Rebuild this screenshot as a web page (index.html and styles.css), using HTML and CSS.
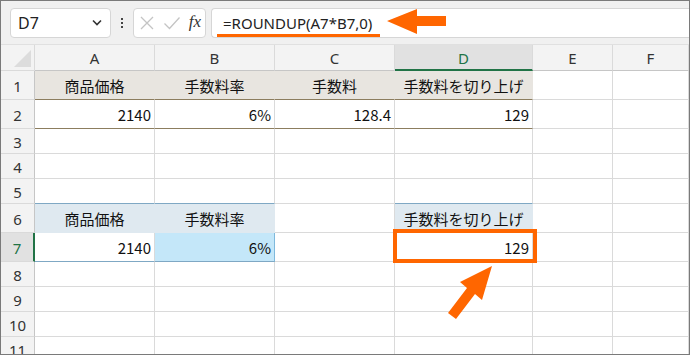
FILE: index.html
```html
<!doctype html>
<html>
	<head>
		<title>ROUNDUP</title>
		<link rel="stylesheet" href="styles.css">
	</head>
	<body>
		<div class="window">
			<div class="formulaBar">
				<div class="nameBox">
					<span>D7</span>
					<svg class="chevron" width="10" height="7" viewBox="0 0 10 7"><path d="M1 1.5 L5 5.5 L9 1.5" fill="none" stroke="#333" stroke-width="1.6"/></svg>
				</div>
				<div class="dots"><i></i><i></i><i></i></div>
				<div class="iconBox">
					<svg width="16" height="16" viewBox="0 0 16 16"><path d="M2 2 L14 14 M14 2 L2 14" stroke="#c4c4c4" stroke-width="1.3"/></svg>
					<svg width="18" height="16" viewBox="0 0 18 16"><path d="M1.5 8.5 L6.5 13.5 L16.5 2.5" fill="none" stroke="#c4c4c4" stroke-width="1.3"/></svg>
					<span class="fx">fx</span>
				</div>
				<div class="formula"><span class="mark">=ROUNDUP(A7*B7,0)</span></div>
			</div>

			<div class="sheet">
				<div class="corner"><i></i></div>
				<div class="ch">A</div>
				<div class="ch">B</div>
				<div class="ch">C</div>
				<div class="ch active">D</div>
				<div class="ch">E</div>
				<div class="ch">F</div>

				<div class="rh">1</div>
				<div class="c head">商品価格</div>
				<div class="c head">手数料率</div>
				<div class="c head">手数料</div>
				<div class="c head">手数料を切り上げ</div>
				<div class="c"></div>
				<div class="c"></div>

				<div class="rh">2</div>
				<div class="c num line">2140</div>
				<div class="c num line">6%</div>
				<div class="c num line">128.4</div>
				<div class="c num line">129</div>
				<div class="c"></div>
				<div class="c"></div>

				<div class="rh">3</div><div class="c"></div><div class="c"></div><div class="c"></div><div class="c"></div><div class="c"></div><div class="c"></div>
				<div class="rh">4</div><div class="c"></div><div class="c"></div><div class="c"></div><div class="c"></div><div class="c"></div><div class="c"></div>
				<div class="rh">5</div><div class="c"></div><div class="c"></div><div class="c"></div><div class="c"></div><div class="c"></div><div class="c"></div>

				<div class="rh">6</div>
				<div class="c blueHead">商品価格</div>
				<div class="c blueHead">手数料率</div>
				<div class="c"></div>
				<div class="c blueHead">手数料を切り上げ</div>
				<div class="c"></div>
				<div class="c"></div>

				<div class="rh active">7</div>
				<div class="c num blueLine">2140</div>
				<div class="c num blueLine picked">6%</div>
				<div class="c"></div>
				<div class="c num">129</div>
				<div class="c"></div>
				<div class="c"></div>

				<div class="rh">8</div><div class="c"></div><div class="c"></div><div class="c"></div><div class="c"></div><div class="c"></div><div class="c"></div>
				<div class="rh">9</div><div class="c"></div><div class="c"></div><div class="c"></div><div class="c"></div><div class="c"></div><div class="c"></div>
				<div class="rh">10</div><div class="c"></div><div class="c"></div><div class="c"></div><div class="c"></div><div class="c"></div><div class="c"></div>
				<div class="rh">11</div><div class="c"></div><div class="c"></div><div class="c"></div><div class="c"></div><div class="c"></div><div class="c"></div>
			</div>

			<svg class="marks" width="690" height="355" viewBox="0 0 690 355">
				<polygon points="387,21 417,9 417,16 446,16 446,26 417,26 417,34" fill="#ff6600"/>
				<rect x="395" y="231" width="140" height="30" fill="none" stroke="#ff6600" stroke-width="4"/>
				<polygon points="492,266 482,300 475,294 456,319 448,313 467,288 460,282" fill="#ff6600"/>
			</svg>
		</div>
	</body>
</html>
```

FILE: styles.css
```css
html, body {
	margin: 0;
	padding: 0;
	background: #fff;
}

.window {
	position: relative;
	width: 688px;
	height: 353px;
	border: 1px solid #7a7a7a;
	overflow: hidden;
	font-family: "Noto Sans CJK JP", sans-serif;
	color: #111;
}

.formulaBar {
	display: flex;
	align-items: center;
	height: 44px;
	padding: 0 0 0 9px;
	box-sizing: border-box;
	background: #f0f0f0;
	border-bottom: 1px solid #e0e0e0;
}

.nameBox,
.iconBox,
.formula {
	height: 30px;
	box-sizing: border-box;
	background: #fff;
	border: 1px solid #d6d6d6;
	border-radius: 4px;
	display: flex;
	align-items: center;
}

.nameBox {
	width: 101px;
	padding: 0 8px 0 7px;
	justify-content: space-between;
	font-family: "Noto Sans", sans-serif;
	font-size: 16px;
	color: #222;
}

.dots {
	width: 22px;
	display: flex;
	flex-direction: column;
	align-items: center;
	gap: 2px;
}

.dots i {
	width: 2px;
	height: 2px;
	background: #444;
}

.iconBox {
	width: 73px;
	padding: 0 4px 0 5px;
	justify-content: space-between;
}

.fx {
	font-family: "Liberation Serif", serif;
	font-style: italic;
	font-size: 17px;
	color: #333;
	padding-bottom: 2px;
}

.formula {
	flex: 1;
	margin-left: 5px;
	border-right: 0;
	border-radius: 4px 0 0 4px;
	padding-left: 5px;
	font-family: "Noto Sans", sans-serif;
	font-size: 15px;
	color: #222;
}

.mark {
	padding: 0 8px 0 6px;
	line-height: 22px;
	border-bottom: 3px solid #ff6600;
	margin-top: 4px;
}

.sheet {
	display: grid;
	grid-template-columns: 34px 120px 120px 120px 138px 80px 1fr;
	grid-template-rows: 26px 29px 29px 25px 25px 25px 29px 29px 25px 25px 25px 25px;
	background: #fff;
}

.sheet > div {
	box-sizing: border-box;
	border-right: 1px solid #dadada;
	border-bottom: 1px solid #dadada;
	display: flex;
	align-items: center;
	font-size: 15px;
	padding-top: 1px;
}

.corner {
	background: #f3f3f3;
	position: relative;
}

.corner i {
	position: absolute;
	right: 3px;
	bottom: 3px;
	width: 0;
	height: 0;
	border-left: 17px solid transparent;
	border-bottom: 17px solid #dcdcdc;
}

.sheet .ch {
	background: #f3f3f3;
	justify-content: center;
	font-family: "Noto Sans", sans-serif;
	color: #333;
	border-bottom-color: #c6c6c6;
}

.sheet .ch.active {
	background: #e1e1e1;
	color: #217346;
	border-bottom: 2px solid #217346;
}

.sheet .rh {
	background: #f3f3f3;
	justify-content: center;
	font-family: "Noto Sans", sans-serif;
	color: #333;
	border-right-color: #c6c6c6;
}

.sheet .rh.active {
	background: #e1e1e1;
	color: #217346;
	border-right: 2px solid #217346;
}

.sheet .head {
	background: #e8e5e0;
	justify-content: center;
	border-bottom-color: #8c7d5e;
	border-right-color: #e8e5e0;
}

.sheet .head:nth-child(18) {
	border-right-color: #dadada;
}

.sheet .num {
	justify-content: flex-end;
	padding-right: 3px;
}

.sheet .line {
	border-bottom-color: #8c7d5e;
}

.sheet .blueHead {
	background: #dfe9f0;
	justify-content: center;
	border-top: 1px solid #7fa8c4;
	margin-top: -1px;
	border-right-color: #dfe9f0;
	border-bottom-color: #dfe9f0;
}

.sheet .blueLine {
	border-bottom-color: #7fa8c4;
}

.sheet .picked {
	background: #c4e7f9;
	border-right-color: #7fb9dc;
}

.marks {
	position: absolute;
	left: -1px;
	top: -1px;
	pointer-events: none;
}
```
